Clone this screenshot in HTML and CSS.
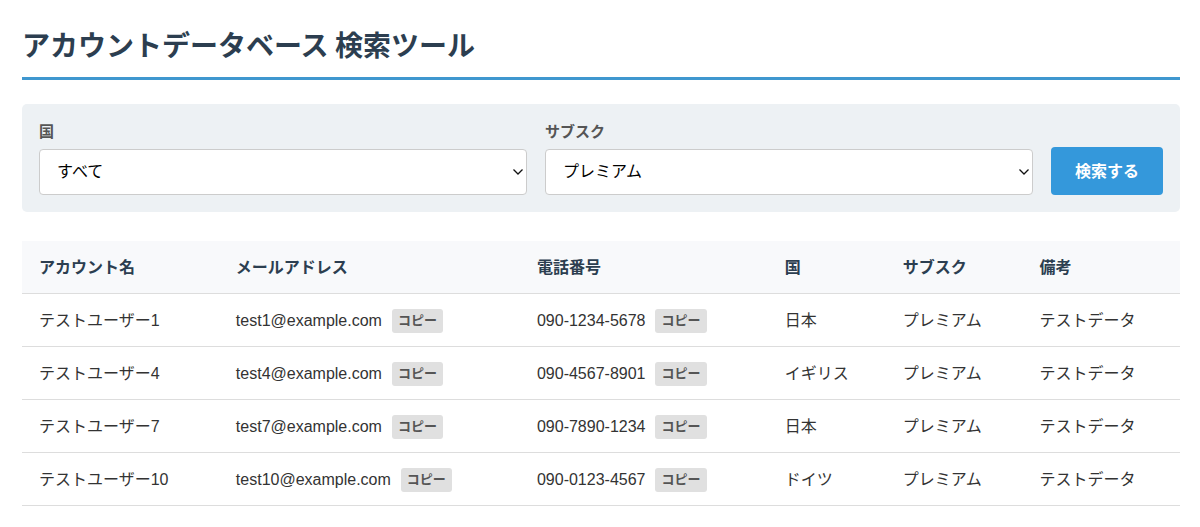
FILE: index.html
```
<!DOCTYPE html>
<html lang="ja">
<head>
    <meta charset="UTF-8">
    <meta name="viewport" content="width=device-width, initial-scale=1.0">
    <title>アカウントデータベース 検索ツール</title>
    <link rel="stylesheet" href="styles.css">
</head>
<body>
    <h1>アカウントデータベース 検索ツール</h1>

    <!-- 検索フォーム -->
    <form class="search-box">
        <div class="form-group">
            <label for="country">国</label>
            <div class="select-wrap">
                <select id="country">
                    <option selected>すべて</option>
                    <option>日本</option>
                    <option>イギリス</option>
                    <option>ドイツ</option>
                </select>
                <svg class="arrow" viewBox="0 0 12 8" aria-hidden="true"><path d="M1.5 1.5 L6 6 L10.5 1.5"/></svg>
            </div>
        </div>
        <div class="form-group">
            <label for="plan">サブスク</label>
            <div class="select-wrap">
                <select id="plan">
                    <option>すべて</option>
                    <option selected>プレミアム</option>
                </select>
                <svg class="arrow" viewBox="0 0 12 8" aria-hidden="true"><path d="M1.5 1.5 L6 6 L10.5 1.5"/></svg>
            </div>
        </div>
        <button type="button" class="search-btn">検索する</button>
    </form>

    <!-- 検索結果 -->
    <table>
        <colgroup>
            <col class="col-name">
            <col class="col-mail">
            <col class="col-phone">
            <col class="col-country">
            <col class="col-plan">
            <col class="col-note">
        </colgroup>
        <thead>
            <tr>
                <th>アカウント名</th>
                <th>メールアドレス</th>
                <th>電話番号</th>
                <th>国</th>
                <th>サブスク</th>
                <th>備考</th>
            </tr>
        </thead>
        <tbody>
            <tr>
                <td>テストユーザー1</td>
                <td>test1@example.com<button type="button" class="copy-btn">コピー</button></td>
                <td>090-1234-5678<button type="button" class="copy-btn">コピー</button></td>
                <td>日本</td>
                <td>プレミアム</td>
                <td>テストデータ</td>
            </tr>
            <tr>
                <td>テストユーザー4</td>
                <td>test4@example.com<button type="button" class="copy-btn">コピー</button></td>
                <td>090-4567-8901<button type="button" class="copy-btn">コピー</button></td>
                <td>イギリス</td>
                <td>プレミアム</td>
                <td>テストデータ</td>
            </tr>
            <tr>
                <td>テストユーザー7</td>
                <td>test7@example.com<button type="button" class="copy-btn">コピー</button></td>
                <td>090-7890-1234<button type="button" class="copy-btn">コピー</button></td>
                <td>日本</td>
                <td>プレミアム</td>
                <td>テストデータ</td>
            </tr>
            <tr>
                <td>テストユーザー10</td>
                <td>test10@example.com<button type="button" class="copy-btn">コピー</button></td>
                <td>090-0123-4567<button type="button" class="copy-btn">コピー</button></td>
                <td>ドイツ</td>
                <td>プレミアム</td>
                <td>テストデータ</td>
            </tr>
        </tbody>
    </table>
</body>
</html>
```

FILE: styles.css
```
* {
    box-sizing: border-box;
}

body {
    font-family: "Liberation Sans", "Noto Sans CJK JP", sans-serif;
    font-size: 16px;
    line-height: 24px;
    color: #333;
    background-color: #fff;
    margin: 0;
    padding: 24px 20px 20px 22px;
}

h1 {
    font-family: "Noto Sans CJK JP", sans-serif;
    color: #2c3e50;
    font-size: 28px;
    line-height: 40px;
    margin: 0 0 24px;
    padding-bottom: 13px;
    border-bottom: 3px solid #3f97cf;
}

/* 検索フォーム */
.search-box {
    display: flex;
    align-items: flex-end;
    gap: 18px;
    margin-bottom: 29px;
    padding: 17px;
    background-color: #edf1f4;
    border-radius: 5px;
}

.form-group {
    flex: 1;
}

label {
    display: block;
    margin-bottom: 6px;
    font-size: 15px;
    line-height: 22px;
    font-weight: bold;
    color: #555;
}

.select-wrap {
    position: relative;
}

select {
    display: block;
    width: 100%;
    height: 46px;
    padding: 0 17px 2px;
    font-family: inherit;
    font-size: 16px;
    color: #000;
    background-color: #fff;
    border: 1px solid #ccc;
    border-radius: 4px;
    appearance: none;
}

/* セレクトの矢印 */
.arrow {
    position: absolute;
    top: 19px;
    right: 3px;
    width: 12px;
    height: 8px;
    fill: none;
    stroke: #111;
    stroke-width: 1.3;
    pointer-events: none;
}

button {
    font-family: inherit;
    font-weight: bold;
    border: none;
    border-radius: 4px;
    cursor: pointer;
}

.search-btn {
    height: 48px;
    padding: 0 24px 2px;
    font-size: 16px;
    color: #fff;
    background-color: #3498db;
}

/* 結果テーブル */
table {
    width: 100%;
    border-collapse: collapse;
    table-layout: fixed;
}

th, td {
    padding: 15px 0 13px 17px;
    text-align: left;
    vertical-align: baseline;
    white-space: nowrap;
    border-bottom: 1px solid #ddd;
}

th {
    color: #2c3e50;
    background-color: #f8f9fb;
}

.col-name {
    width: 17%;
}

.col-mail {
    width: 26%;
}

.col-phone {
    width: 21.4%;
}

.col-country {
    width: 10.2%;
}

.col-plan {
    width: 11.8%;
}

.copy-btn {
    height: 24px;
    margin-left: 10px;
    padding: 0 6px 3px;
    font-size: 13px;
    color: #555;
    background-color: #e0e0e0;
    border-radius: 3px;
    vertical-align: top;
}
```
